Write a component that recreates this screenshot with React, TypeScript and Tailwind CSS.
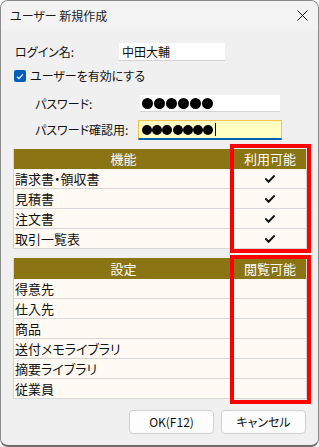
import React from 'react';

const FEATURES = ['請求書・領収書', '見積書', '注文書', '取引一覧表'];
const SETTINGS = ['得意先', '仕入先', '商品', '送付メモライブラリ', '摘要ライブラリ', '従業員'];

function Dots({ count, size, gap }: { count: number; size: string; gap: string }) {
  return (
    <div className={`flex items-center ${gap}`}>
      {Array.from({ length: count }).map((_, i) => (
        <span key={i} className={`${size} rounded-full bg-black`} />
      ))}
    </div>
  );
}

function CheckMark() {
  return (
    <svg width="10" height="8" viewBox="0 0 10 8" fill="none">
      <path d="M1 4.2 L3.6 6.8 L9 1.2" stroke="#111" strokeWidth="2" strokeLinecap="square" />
    </svg>
  );
}

export default function App() {
  return (
    <div className="w-[319px] h-[447px] flex flex-col bg-[#f0f0f0] border border-[#8a8a8a] border-b-2 border-b-[#6e6e6e] rounded-[8px] overflow-hidden font-['Noto_Sans_CJK_JP',sans-serif] text-[12px] text-[#111] [font-feature-settings:'palt']">
      {/* タイトルバー */}
      <div className="h-[29px] shrink-0 bg-[#f3f3f3] flex items-center justify-between pl-[9px] pr-[10px]">
        <span className="text-[12px] text-[#1b1b1b]">ユーザー 新規作成</span>
        <svg width="11" height="11" viewBox="0 0 11 11">
          <path d="M0.5 0.5 L10.5 10.5 M10.5 0.5 L0.5 10.5" stroke="#1b1b1b" strokeWidth="1" />
        </svg>
      </div>

      <div className="flex-1 flex flex-col pl-[12px] pr-[11px] pt-[13px]">
        {/* ログイン名 */}
        <div className="flex items-center h-[18px] pl-[2px]">
          <span className="w-[104px]">ログイン名:</span>
          <div className="w-[106px] h-[18px] bg-white border-b border-[#d4d4d4] flex items-center pl-[3px] text-[12px]">
            中田大輔
          </div>
        </div>

        {/* 有効チェック */}
        <div className="flex items-center h-[12px] mt-[9px] pl-[1px] gap-[4px]">
          <span className="w-[12px] h-[12px] rounded-[2px] bg-[#005fb8] flex items-center justify-center">
            <svg width="8" height="7" viewBox="0 0 8 7" fill="none">
              <path d="M1 3.6 L3 5.6 L7 1.2" stroke="white" strokeWidth="1.2" />
            </svg>
          </span>
          <span>ユーザーを有効にする</span>
        </div>

        {/* パスワード */}
        <div className="flex items-center h-[17px] mt-[13px] pl-[22px]">
          <span className="w-[105px]">パスワード:</span>
          <div className="w-[140px] h-[17px] bg-white border-b border-[#d4d4d4] flex items-center pl-[2px]">
            <Dots count={6} size="w-[11px] h-[11px]" gap="gap-[1px]" />
          </div>
        </div>

        {/* パスワード確認用 */}
        <div className="flex items-center h-[20px] mt-[8px] pl-[22px]">
          <span className="w-[103px]">パスワード確認用:</span>
          <div className="w-[144px] h-[20px] bg-[#ffffc4] border border-[#f7c14a] border-b-2 border-b-[#0063b1] flex items-center pl-[3px]">
            <Dots count={7} size="w-[10px] h-[10px]" gap="gap-[0.2px]" />
            <span className="ml-[2px] w-[1px] h-[13px] bg-black" />
          </div>
        </div>

        {/* 機能テーブル */}
        <div className="relative mt-[9px]">
          <div className="border-x border-[#d4d4d4]">
            <div className="flex h-[20px] bg-[#8a7414] text-white text-[13px]">
              <div className="flex-1 flex items-center justify-center">機能</div>
              <div className="w-[73px] flex items-center justify-center border-l border-[#e6dcae]">利用可能</div>
            </div>
            {FEATURES.map((f) => (
              <div key={f} className="flex h-[20px] bg-[#fffaf3] border-b border-[#d8d8d8]">
                <div className="flex-1 flex items-center pl-[1px] text-[13px]">{f}</div>
                <div className="w-[73px] flex items-center justify-center border-l border-[#d8d8d8]">
                  <CheckMark />
                </div>
              </div>
            ))}
          </div>
          <div className="absolute left-[217px] top-[-5px] w-[81px] h-[109px] border-[4px] border-[#ff0000]" />
        </div>

        {/* 設定テーブル */}
        <div className="relative mt-[9px]">
          <div className="border-x border-[#d4d4d4]">
            <div className="flex h-[21px] bg-[#8a7414] text-white text-[13px]">
              <div className="flex-1 flex items-center justify-center">設定</div>
              <div className="w-[73px] flex items-center justify-center border-l border-[#e6dcae]">閲覧可能</div>
            </div>
            {SETTINGS.map((s) => (
              <div key={s} className="flex h-[20px] bg-[#fffaf3] border-b border-[#d8d8d8]">
                <div className="flex-1 flex items-center pl-[1px] text-[13px]">{s}</div>
                <div className="w-[73px] border-l border-[#d8d8d8]" />
              </div>
            ))}
          </div>
          <div className="absolute left-[217px] top-[-3px] w-[81px] h-[149px] border-[4px] border-[#ff0000]" />
        </div>

        {/* ボタン */}
        <div className="flex justify-end gap-[7px] mt-[11px] mr-[1px]">
          <button className="w-[85px] h-[24px] bg-[#fdfdfd] border border-[#d0d0d0] rounded-[4px] text-[12px] flex items-center justify-center">
            OK(F12)
          </button>
          <button className="w-[85px] h-[24px] bg-[#fdfdfd] border border-[#d0d0d0] rounded-[4px] text-[12px] flex items-center justify-center">
            キャンセル
          </button>
        </div>
      </div>
    </div>
  );
}
